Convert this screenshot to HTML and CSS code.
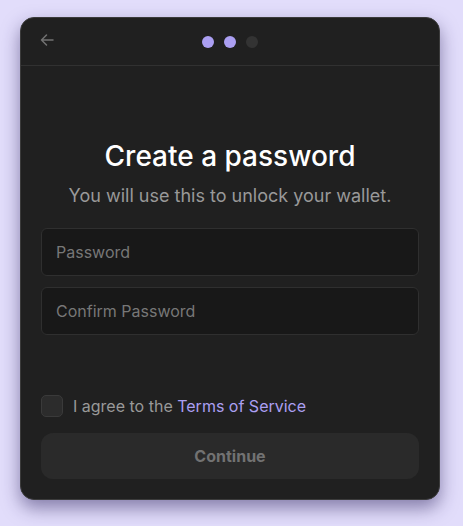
FILE: index.html
```html
<!DOCTYPE html>
<html lang="en">
<head>
  <meta charset="UTF-8">
  <meta name="viewport" content="width=device-width, initial-scale=1.0">
  <title>Create a password</title>
  <link rel="stylesheet" href="styles.css">
</head>
<body>
  <div class="card">
    <div class="card-header">
      <button class="back-button" aria-label="Back">
        <svg width="14" height="14" viewBox="0 0 14 14" fill="none" stroke="currentColor" stroke-width="1.5" stroke-linecap="round" stroke-linejoin="round">
          <path d="M13 7H1.5M6.5 2L1.5 7l5 5"/>
        </svg>
      </button>
      <div class="steps">
        <span class="step active"></span>
        <span class="step active"></span>
        <span class="step"></span>
      </div>
    </div>

    <div class="card-body">
      <h1 class="title">Create a password</h1>
      <p class="subtitle">You will use this to unlock your wallet.</p>

      <div class="fields">
        <input class="field" type="password" placeholder="Password">
        <input class="field" type="password" placeholder="Confirm Password">
      </div>

      <label class="terms">
        <span class="checkbox"></span>
        <span>I agree to the <a href="#" class="terms-link">Terms of Service</a></span>
      </label>

      <button class="continue-button" disabled>Continue</button>
    </div>
  </div>
</body>
</html>
```

FILE: styles.css
```css
html {
  background: #e2ddfb;
}

body {
  margin: 0;
  min-height: 526px;
  box-sizing: border-box;
  padding: 17px 0 0 20px;
  background: #e2ddfb;
  font-family: Inter, "Noto Sans", sans-serif;
}

.card {
  width: 420px;
  height: 483px;
  box-sizing: border-box;
  background: #202020;
  border: 1px solid #3b3b3b;
  border-radius: 14px;
  box-shadow: 0 8px 18px rgba(40, 30, 90, 0.5);
  display: flex;
  flex-direction: column;
  overflow: hidden;
}

.card-header {
  height: 47px;
  flex-shrink: 0;
  border-bottom: 1px solid #313131;
  display: flex;
  align-items: center;
  justify-content: center;
  position: relative;
}

.back-button {
  position: absolute;
  left: 19px;
  top: 15px;
  padding: 0;
  background: none;
  border: none;
  color: #727272;
  display: flex;
  cursor: pointer;
}

.steps {
  display: flex;
  gap: 10px;
  margin-top: 1px;
}

.step {
  width: 12px;
  height: 12px;
  border-radius: 50%;
  background: #333333;
}

.step.active {
  background: #ab9ff2;
}

.card-body {
  flex: 1;
  display: flex;
  flex-direction: column;
  padding: 0 20px 20px;
}

.title {
  margin: 73px 0 0;
  text-align: center;
  font-size: 28px;
  font-weight: 500;
  line-height: 34px;
  color: #ffffff;
}

.subtitle {
  margin: 11px 0 0;
  text-align: center;
  font-size: 18px;
  line-height: 24px;
  color: #999999;
}

.fields {
  display: flex;
  flex-direction: column;
  gap: 11px;
  margin-top: 20px;
}

.field {
  height: 48px;
  box-sizing: border-box;
  padding: 0 14px;
  background: #181818;
  border: 1px solid #2f2f2f;
  border-radius: 6px;
  font-family: inherit;
  font-size: 16px;
  color: #ffffff;
  outline: none;
}

.field::placeholder {
  color: #777777;
}

.terms {
  margin-top: auto;
  display: flex;
  align-items: center;
  gap: 10px;
  font-size: 16px;
  color: #999999;
}

.checkbox {
  width: 20px;
  height: 20px;
  border: 1px solid #3a3a3a;
  border-radius: 5px;
  background: #2c2c2c;
}

.terms-link {
  color: #ab9ff2;
  text-decoration: none;
}

.continue-button {
  margin-top: 16px;
  height: 46px;
  border: none;
  border-radius: 12px;
  background: #2a2a2a;
  font-family: inherit;
  font-size: 16px;
  font-weight: 700;
  color: #727272;
}
```
